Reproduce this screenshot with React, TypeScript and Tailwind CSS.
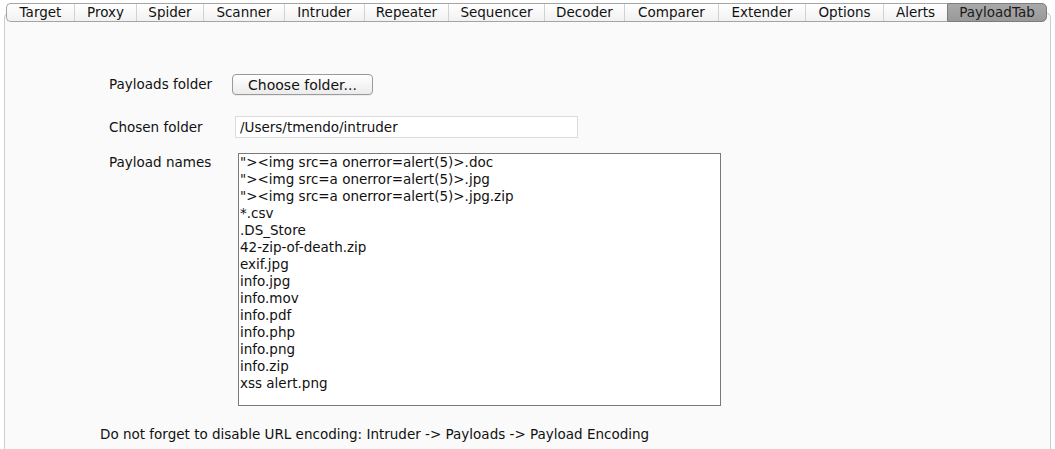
import React from 'react';

const tabs = [
  { name: 'Target', w: 'w-[67px]' },
  { name: 'Proxy', w: 'w-[62px]' },
  { name: 'Spider', w: 'w-[67px]' },
  { name: 'Scanner', w: 'w-[81px]' },
  { name: 'Intruder', w: 'w-[80px]' },
  { name: 'Repeater', w: 'w-[84px]' },
  { name: 'Sequencer', w: 'w-[96px]' },
  { name: 'Decoder', w: 'w-[80px]' },
  { name: 'Comparer', w: 'w-[94px]' },
  { name: 'Extender', w: 'w-[87px]' },
  { name: 'Options', w: 'w-[78px]' },
  { name: 'Alerts', w: 'w-[64px]' },
];

const payloads = [
  '"><img src=a onerror=alert(5)>.doc',
  '"><img src=a onerror=alert(5)>.jpg',
  '"><img src=a onerror=alert(5)>.jpg.zip',
  '*.csv',
  '.DS_Store',
  '42-zip-of-death.zip',
  'exif.jpg',
  'info.jpg',
  'info.mov',
  'info.pdf',
  'info.php',
  'info.png',
  'info.zip',
  'xss alert.png',
];

export default function App() {
  return (
    <div
      className="w-[1055px] h-[449px] overflow-hidden bg-white text-[13.5px] text-[#111]"
      style={{ fontFamily: '"DejaVu Sans", "Liberation Sans", sans-serif' }}
    >
      <div className="relative pt-[3px]">
        {/* Tab strip, sits over the top edge of the panel */}
        <div className="relative z-10 ml-[6px] flex h-[19px] w-[1041px]">
          <div className="flex flex-1 rounded-l-[5px] border border-r-0 border-[#a4a4a4] bg-gradient-to-b from-white to-[#f1f1f1]">
            {tabs.map((t, i) => (
              <div
                key={t.name}
                className={`${t.w} flex items-center justify-center leading-none ${
                  i > 0 ? 'border-l border-[#d2d2d2]' : ''
                }`}
              >
                {t.name}
              </div>
            ))}
          </div>
          <div className="flex w-[101px] items-center justify-center rounded-r-[5px] border border-[#7c7c7c] bg-gradient-to-b from-[#a9a9a9] to-[#999999] leading-none text-[#1a1a1a]">
            PayloadTab
          </div>
        </div>

        {/* Panel */}
        <div className="ml-[4px] -mt-[10px] h-[440px] w-[1047px] rounded-t-[6px] border border-b-0 border-[#cdcdcd] bg-[#fafafa] pl-[104px] pt-[61px]">
          <div className="flex items-center">
            <div className="w-[123px]">Payloads folder</div>
            <button className="h-[21px] w-[141px] rounded-[4px] border border-[#9a9a9a] bg-gradient-to-b from-white to-[#ececec] text-[14px] leading-none shadow-[0_1px_0_rgba(0,0,0,0.05)]">
              Choose folder...
            </button>
          </div>

          <div className="mt-[21px] flex items-center">
            <div className="w-[126px]">Chosen folder</div>
            <div className="flex h-[22px] w-[343px] items-center border border-[#dcdcdc] bg-white pl-[4px]">
              /Users/tmendo/intruder
            </div>
          </div>

          <div className="mt-[15px] flex">
            <div className="-mt-[1px] w-[129px]">Payload names</div>
            <div className="h-[253px] w-[483px] border border-[#7a7a7a] bg-white pl-[1px] leading-[17px]">
              {payloads.map((p) => (
                <div key={p} className="whitespace-pre">
                  {p}
                </div>
              ))}
            </div>
          </div>

          <div className="-ml-[9px] mt-[18px]">
            Do not forget to disable URL encoding: Intruder -&gt; Payloads -&gt; Payload Encoding
          </div>
        </div>
      </div>
    </div>
  );
}
